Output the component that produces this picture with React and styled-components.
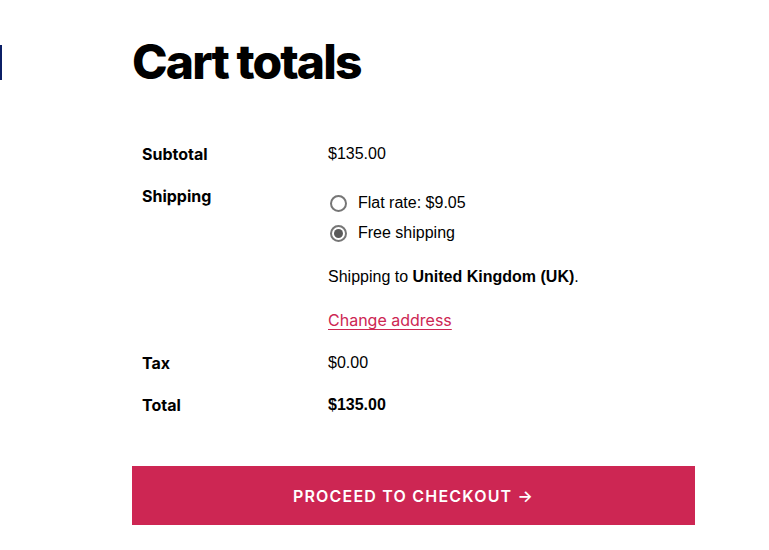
import React from "react";
import styled, { createGlobalStyle } from "styled-components";

const Global = createGlobalStyle`
  html, body { margin: 0; padding: 0; background: #fff; }
  body { font-family: "Liberation Sans", Arial, sans-serif; color: #000; }
`;

const Page = styled.div`
  display: flex;
  align-items: flex-start;
  width: 769px;
  height: 550px;
  overflow: hidden;
`;

const EdgeMark = styled.div`
  width: 2px;
  height: 35px;
  margin-top: 45px;
  background: #0b1f66;
  flex: none;
`;

const Main = styled.div`
  margin-left: 130px;
  width: 563px;
  padding-top: 38px;
  display: flex;
  flex-direction: column;
`;

const Heading = styled.h1`
  margin: 0;
  font-family: Inter, sans-serif;
  font-weight: 800;
  font-size: 48px;
  line-height: 1;
  letter-spacing: -1.9px;
  color: #000;
`;

const Table = styled.div`
  margin-top: 47px;
  display: grid;
  grid-template-columns: 196px 1fr;
`;

const Label = styled.div`
  padding: 9px 10px;
  font-family: Inter, sans-serif;
  font-weight: 700;
  font-size: 16px;
  line-height: 24px;
`;

const Value = styled.div`
  padding: 9px 0;
  font-family: "Liberation Sans", Arial, sans-serif;
  font-size: 16px;
  line-height: 24px;
  font-weight: ${(p) => (p.$strong ? 700 : 400)};
`;

const Options = styled.ul`
  list-style: none;
  margin: 7px 0 0;
  padding: 0;
  display: flex;
  flex-direction: column;
  gap: 6px;
`;

const Option = styled.li`
  display: flex;
  align-items: center;
  gap: 11px;
  height: 24px;
`;

const Radio = styled.span`
  box-sizing: border-box;
  width: 17px;
  height: 17px;
  margin-left: 2px;
  border-radius: 50%;
  border: 2px solid #767676;
  display: flex;
  align-items: center;
  justify-content: center;
  &::after {
    content: "";
    width: 9px;
    height: 9px;
    border-radius: 50%;
    background: ${(p) => (p.$checked ? "#5a5a5a" : "transparent")};
  }
`;

const Note = styled.p`
  margin: 20px 0 0;
`;

const ChangeLink = styled.a`
  display: inline-block;
  margin-top: 19px;
  font-family: Inter, sans-serif;
  color: #cd2653;
  text-decoration: underline;
  text-underline-offset: 3px;
  text-decoration-thickness: 1px;
`;

const Checkout = styled.button`
  margin-top: 40px;
  width: 563px;
  height: 59px;
  border: none;
  background: #cd2653;
  color: #fff;
  font-family: Inter, sans-serif;
  font-weight: 600;
  font-size: 16px;
  letter-spacing: 1.2px;
  text-transform: uppercase;
  cursor: pointer;
`;

export default function App() {
  return (
    <>
      <Global />
      <Page>
        <EdgeMark />
        <Main>
          <Heading>Cart totals</Heading>
          <Table>
            <Label>Subtotal</Label>
            <Value>$135.00</Value>
            <Label>Shipping</Label>
            <Value>
              <Options>
                <Option>
                  <Radio />
                  Flat rate: $9.05
                </Option>
                <Option>
                  <Radio $checked />
                  Free shipping
                </Option>
              </Options>
              <Note>
                Shipping to <strong>United Kingdom (UK)</strong>.
              </Note>
              <ChangeLink href="#">Change address</ChangeLink>
            </Value>
            <Label>Tax</Label>
            <Value>$0.00</Value>
            <Label>Total</Label>
            <Value $strong>$135.00</Value>
          </Table>
          <Checkout>Proceed to checkout →</Checkout>
        </Main>
      </Page>
    </>
  );
}
